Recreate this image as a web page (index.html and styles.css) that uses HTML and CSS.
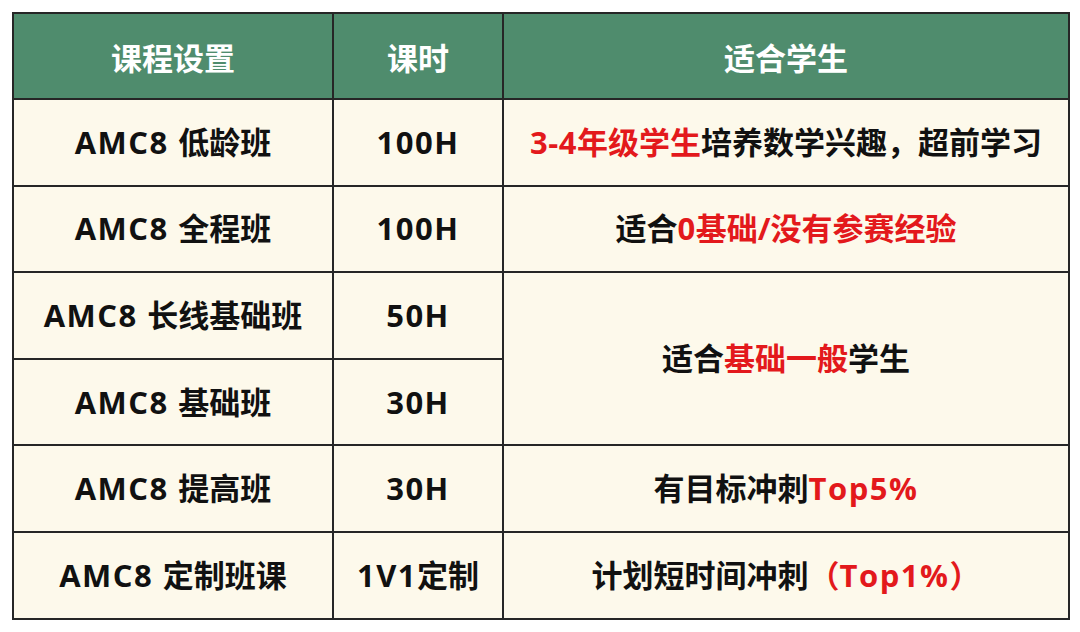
FILE: index.html
```html
<!DOCTYPE html>
<html lang="zh-CN">
<head>
<meta charset="utf-8">
<title>AMC8 课程设置</title>
<link rel="stylesheet" href="styles.css">
</head>
<body>
<table class="course-table">
  <colgroup>
    <col class="col-name">
    <col class="col-hours">
    <col class="col-fit">
  </colgroup>
  <thead>
    <tr>
      <th>课程设置</th>
      <th>课时</th>
      <th>适合学生</th>
    </tr>
  </thead>
  <tbody>
    <tr>
      <td><span class="lat">AMC8 </span>低龄班</td>
      <td><span class="lat">100H</span></td>
      <td><span class="red"><span class="lat-s">3-4</span>年级学生</span>培养数学兴趣，超前学习</td>
    </tr>
    <tr>
      <td><span class="lat">AMC8 </span>全程班</td>
      <td><span class="lat">100H</span></td>
      <td>适合<span class="red"><span class="lat-s">0</span>基础/没有参赛经验</span></td>
    </tr>
    <tr>
      <td><span class="lat">AMC8 </span>长线基础班</td>
      <td><span class="lat">50H</span></td>
      <td rowspan="2">适合<span class="red">基础一般</span>学生</td>
    </tr>
    <tr>
      <td><span class="lat">AMC8 </span>基础班</td>
      <td><span class="lat">30H</span></td>
    </tr>
    <tr>
      <td><span class="lat">AMC8 </span>提高班</td>
      <td><span class="lat">30H</span></td>
      <td>有目标冲刺<span class="red lat">Top5%</span></td>
    </tr>
    <tr>
      <td><span class="lat">AMC8 </span>定制班课</td>
      <td><span class="lat">1V1</span>定制</td>
      <td>计划短时间冲刺<span class="red">（<span class="lat">Top1%</span>）</span></td>
    </tr>
  </tbody>
</table>
</body>
</html>
```

FILE: styles.css
```css
html, body {
  margin: 0;
  padding: 0;
  background: #ffffff;
}

body {
  padding: 12px 0 0 12px;
  font-family: "Open Sans", "Noto Sans CJK SC", sans-serif;
}

.course-table {
  border-collapse: collapse;
  width: 1056px;
  table-layout: fixed;
  border: 2px solid #262626;
}

.col-name { width: 320px; }
.col-hours { width: 170px; }
.col-fit { width: 566px; }

.course-table th,
.course-table td {
  border: 2px solid #262626;
  text-align: center;
  vertical-align: middle;
  padding: 0;
  font-weight: 700;
  font-size: 31px;
  line-height: 1;
  white-space: nowrap;
}

.course-table th {
  background: #4f8c6d;
  color: #ffffff;
  height: 84px;
  font-family: "Noto Sans CJK SC", sans-serif;
  font-size: 31px;
}

.course-table td {
  background: #fdf9eb;
  color: #111111;
  height: 84.6px;
}

.lat {
  letter-spacing: 1.5px;
}

.lat-s {
  letter-spacing: 0.5px;
}

.red {
  color: #e3191c;
}
```
